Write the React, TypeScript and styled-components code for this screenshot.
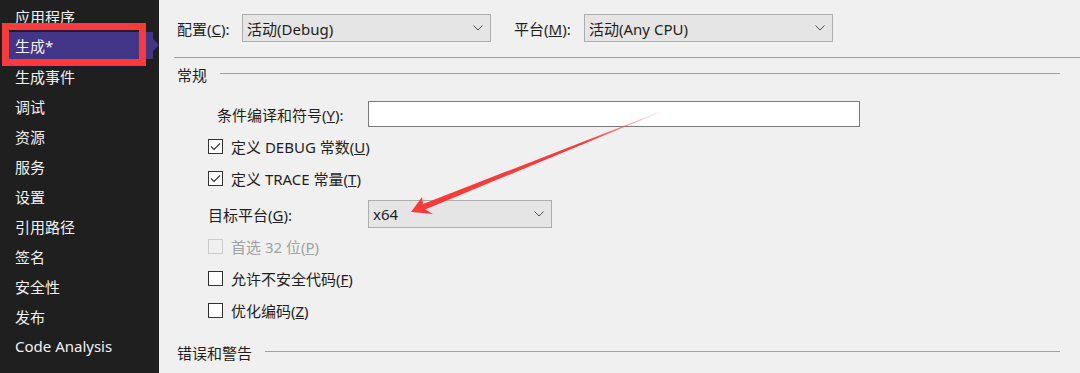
import React from 'react';
import styled, { createGlobalStyle } from 'styled-components';

const GlobalStyle = createGlobalStyle`
    html, body {
        margin: 0;
        padding: 0;
        background: #f0f0f0;
        overflow: hidden;
    }
    body {
        font-family: "Segoe UI", "Noto Sans", "Noto Sans CJK SC", sans-serif;
        font-size: 15px;
        color: #1e1e1e;
    }
`;

const Page = styled.div`
    position: relative;
    display: grid;
    grid-template-columns: 159px 1fr;
    width: 1080px;
    height: 373px;
    overflow: hidden;
`;

const Sidebar = styled.nav`
    position: relative;
    background: #1f1f1f;
    padding-top: 1px;
    display: flex;
    flex-direction: column;
`;

const NavItem = styled.div<{ $active?: boolean }>`
    position: relative;
    display: flex;
    align-items: center;
    height: ${p => (p.$active ? '27px' : '30px')};
    margin: ${p => (p.$active ? '1px 6px 2px 9px' : '0 6px 0 9px')};
    padding-left: 6px;
    color: #f1f1f1;
    white-space: nowrap;
    background: ${p => (p.$active ? '#433587' : 'transparent')};

    &::after {
        content: '';
        display: ${p => (p.$active ? 'block' : 'none')};
        position: absolute;
        right: -6px;
        top: 7px;
        border-style: solid;
        border-width: 6px 0 6px 6px;
        border-color: transparent transparent transparent #433587;
    }
`;

const HighlightBox = styled.div`
    position: absolute;
    left: 2px;
    top: 23px;
    width: 144px;
    height: 43px;
    box-sizing: border-box;
    border: 7px solid #fb3a3a;
    pointer-events: none;
`;

const Content = styled.main`
    display: flex;
    flex-direction: column;
    padding: 14px 0 0 15px;
`;

const TopBar = styled.div`
    display: flex;
    align-items: center;
    height: 28px;
    padding-left: 3px;
`;

const FieldLabel = styled.label<{ $width: number; $indent?: number }>`
    width: ${p => p.$width}px;
    padding-left: ${p => p.$indent ?? 0}px;
    box-sizing: border-box;
    white-space: nowrap;
    flex-shrink: 0;
`;

const Select = styled.div<{ $width: number; $gap?: number }>`
    display: flex;
    align-items: center;
    justify-content: space-between;
    box-sizing: border-box;
    width: ${p => p.$width}px;
    height: 28px;
    margin-right: ${p => p.$gap ?? 0}px;
    padding: 0 7px 0 4px;
    background: #e5e5e5;
    border: 1px solid #adadad;
    white-space: nowrap;
`;

const Chevron = () => (
    <svg width="10" height="6" viewBox="0 0 10 6">
        <polyline points="0.5,0.5 5,5 9.5,0.5" fill="none" stroke="#505050" strokeWidth="1" />
    </svg>
);

const Rule = styled.div`
    height: 1px;
    background: #a0a0a0;
    margin-top: 15px;
`;

const SectionHeader = styled.div<{ $top: number }>`
    display: flex;
    align-items: center;
    gap: 13px;
    height: 20px;
    margin-top: ${p => p.$top}px;
    padding: 0 20px 0 3px;

    &::after {
        content: '';
        flex: 1;
        height: 1px;
        margin-top: -1px;
        background: #a0a0a0;
    }
`;

const Form = styled.div`
    display: flex;
    flex-direction: column;
    padding-left: 34px;
`;

const FieldRow = styled.div<{ $top: number }>`
    display: flex;
    align-items: center;
    margin-top: ${p => p.$top}px;
`;

const TextBox = styled.div`
    width: 492px;
    height: 26px;
    box-sizing: border-box;
    background: #ffffff;
    border: 1px solid #7a7a7a;
`;

const CheckRow = styled.label<{ $disabled?: boolean; $top?: number }>`
    display: flex;
    align-items: center;
    gap: 8px;
    height: 32px;
    margin-top: ${p => p.$top ?? 0}px;
    color: ${p => (p.$disabled ? '#a2a2a2' : '#1e1e1e')};
    white-space: nowrap;
`;

const Box = styled.span<{ $disabled?: boolean }>`
    display: flex;
    align-items: center;
    justify-content: center;
    width: 15px;
    height: 15px;
    box-sizing: border-box;
    border: 1px solid ${p => (p.$disabled ? '#cccccc' : '#333333')};
    background: ${p => (p.$disabled ? '#f0f0f0' : '#ffffff')};
`;

const Arrow = styled.svg`
    position: absolute;
    left: 0;
    top: 0;
    pointer-events: none;
`;

interface CheckProps {
    children: React.ReactNode;
    checked?: boolean;
    disabled?: boolean;
    top?: number;
}

function Check(props: CheckProps) {
    return (
        <CheckRow $disabled={ props.disabled } $top={ props.top }>
            <Box $disabled={ props.disabled }>
                { props.checked && (
                    <svg width="11" height="9" viewBox="0 0 11 9">
                        <polyline points="1,4.5 4,7.5 10,1.5" fill="none" stroke="#333" strokeWidth="1.2" />
                    </svg>
                ) }
            </Box>
            <span>{ props.children }</span>
        </CheckRow>
    );
}

const navItems = ['应用程序', '生成*', '生成事件', '调试', '资源', '服务', '设置', '引用路径', '签名', '安全性', '发布', 'Code Analysis'];

export default function App() {
    return (
        <Page>
            <GlobalStyle />
            <Sidebar>
                { navItems.map(item => (
                    <NavItem key={ item } $active={ item === '生成*' }>{ item }</NavItem>
                )) }
                <HighlightBox />
            </Sidebar>
            <Content>
                <TopBar>
                    <FieldLabel $width={ 65 }>配置(<u>C</u>):</FieldLabel>
                    <Select $width={ 249 } $gap={ 23 }>活动(Debug)<Chevron /></Select>
                    <FieldLabel $width={ 70 }>平台(<u>M</u>):</FieldLabel>
                    <Select $width={ 249 }>活动(Any CPU)<Chevron /></Select>
                </TopBar>
                <Rule />
                <SectionHeader $top={ 6 }>常规</SectionHeader>
                <Form>
                    <FieldRow $top={ 17 }>
                        <FieldLabel $width={ 160 } $indent={ 9 }>条件编译和符号(<u>Y</u>):</FieldLabel>
                        <TextBox />
                    </FieldRow>
                    <Check checked top={ 3 }>定义 DEBUG 常数(<u>U</u>)</Check>
                    <Check checked>定义 TRACE 常量(<u>T</u>)</Check>
                    <FieldRow $top={ 6 }>
                        <FieldLabel $width={ 160 }>目标平台(<u>G</u>):</FieldLabel>
                        <Select $width={ 184 }>x64<Chevron /></Select>
                    </FieldRow>
                    <Check disabled top={ 2 }>首选 32 位(<u>P</u>)</Check>
                    <Check>允许不安全代码(<u>F</u>)</Check>
                    <Check>优化编码(<u>Z</u>)</Check>
                </Form>
                <SectionHeader $top={ 16 }>错误和警告</SectionHeader>
            </Content>
            <Arrow width="1080" height="373" viewBox="0 0 1080 373">
                <defs>
                    <linearGradient id="fade" x1="412" y1="212" x2="660" y2="112" gradientUnits="userSpaceOnUse">
                        <stop offset="0" stopColor="#fb3a3a" />
                        <stop offset="0.7" stopColor="#fb3a3a" />
                        <stop offset="1" stopColor="#fb3a3a" stopOpacity="0.15" />
                    </linearGradient>
                </defs>
                <polygon
                    points="411,212 433,214 425,209.5 660,112.3 660,111.7 423,204 422,197"
                    fill="url(#fade)"
                />
            </Arrow>
        </Page>
    );
}
